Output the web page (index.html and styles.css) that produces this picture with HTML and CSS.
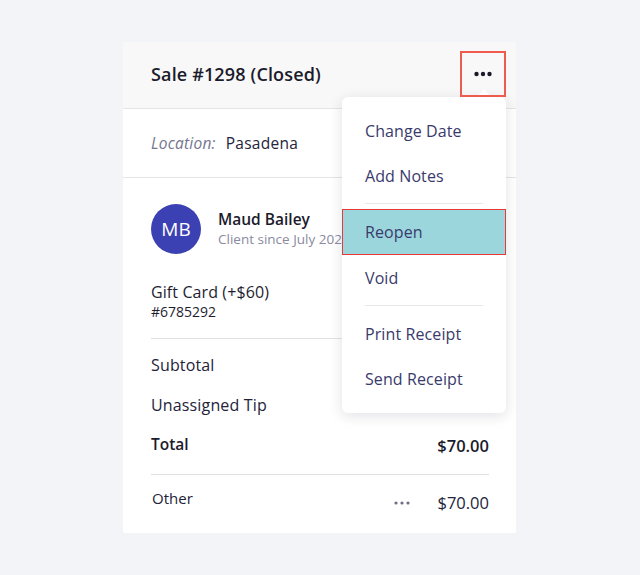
FILE: index.html
```html
<!DOCTYPE html>
<html>
<head>
<meta charset="utf-8">
<link rel="stylesheet" href="styles.css">
</head>
<body>
<div class="card">
  <div class="header">
    <div class="title">Sale #1298 (Closed)</div>
    <div class="more-btn">
      <svg width="18" height="6" viewBox="0 0 18 6"><circle cx="2.5" cy="3" r="2.2" fill="#1a1a2a"/><circle cx="9" cy="3" r="2.2" fill="#1a1a2a"/><circle cx="15.5" cy="3" r="2.2" fill="#1a1a2a"/></svg>
    </div>
  </div>
  <div class="location">
    <span class="loc-label">Location:</span>
    <span class="loc-value">Pasadena</span>
  </div>
  <div class="content">
    <div class="client">
      <div class="avatar">MB</div>
      <div class="client-info">
        <div class="client-name">Maud Bailey</div>
        <div class="client-sub">Client since July 2020</div>
      </div>
    </div>
    <div class="item">
      <div class="item-name">Gift Card (+$60)</div>
      <div class="item-sub">#6785292</div>
    </div>
    <div class="divider"></div>
    <div class="row first"><span>Subtotal</span></div>
    <div class="row"><span>Unassigned Tip</span></div>
    <div class="row total"><span>Total</span><span class="total-val">$70.00</span></div>
    <div class="divider second"></div>
    <div class="row other">
      <span class="other-label">Other</span>
      <span class="other-right">
        <svg width="16" height="4" viewBox="0 0 16 4"><circle cx="2" cy="2" r="1.6" fill="#6e6e86"/><circle cx="8" cy="2" r="1.6" fill="#6e6e86"/><circle cx="14" cy="2" r="1.6" fill="#6e6e86"/></svg>
        <span class="other-val">$70.00</span>
      </span>
    </div>
  </div>
  <div class="menu">
    <div class="menu-item">Change Date</div>
    <div class="menu-item">Add Notes</div>
    <div class="menu-sep"></div>
    <div class="menu-item active">Reopen</div>
    <div class="menu-item">Void</div>
    <div class="menu-sep"></div>
    <div class="menu-item">Print Receipt</div>
    <div class="menu-item">Send Receipt</div>
  </div>
</div>
</body>
</html>
```
FILE: styles.css
```css
html, body {
  margin: 0;
  padding: 0;
}
body {
  background: #f3f4f7;
  width: 640px;
  height: 575px;
  overflow: hidden;
  font-family: "Open Sans", "Lato", sans-serif;
  color: #1e1e30;
}
.card {
  position: relative;
  width: 393px;
  margin: 42px 0 0 123px;
  background: #ffffff;
}
.header {
  box-sizing: border-box;
  height: 67px;
  background: #f8f8f8;
  border-bottom: 1px solid #e5e5e8;
  display: flex;
  align-items: center;
  justify-content: space-between;
  padding: 0 10px 0 28px;
}
.title {
  font-size: 18px;
  font-weight: 600;
  letter-spacing: 0.15px;
  color: #1b1b2c;
  margin-bottom: 3px;
}
.more-btn {
  position: relative;
  z-index: 3;
  box-sizing: border-box;
  width: 46px;
  height: 46px;
  margin-bottom: 2px;
  border: 2px solid #ee5b4f;
  display: flex;
  align-items: center;
  justify-content: center;
}
.location {
  box-sizing: border-box;
  height: 69px;
  border-bottom: 1px solid #e5e5e8;
  display: flex;
  align-items: center;
  gap: 10px;
  padding-left: 28px;
  font-size: 15.5px;
  letter-spacing: 0.25px;
}
.loc-label {
  font-style: italic;
  color: #75758f;
}
.loc-value {
  color: #24243a;
}
.content {
  padding: 26px 27px 20px 28px;
}
.client {
  display: flex;
  align-items: center;
  gap: 17px;
}
.avatar {
  width: 50px;
  height: 50px;
  border-radius: 50%;
  background: #3b40b2;
  color: #ffffff;
  font-size: 19px;
  display: flex;
  align-items: center;
  justify-content: center;
  flex-shrink: 0;
}
.client-info {
  white-space: nowrap;
}
.client-name {
  font-size: 15.5px;
  font-weight: 600;
  line-height: 20px;
  color: #1b1b2c;
}
.client-sub {
  font-size: 13.5px;
  line-height: 20px;
  color: #8a8aa0;
}
.item {
  margin-top: 28px;
}
.item-name {
  font-size: 16px;
  line-height: 20px;
  letter-spacing: 0.1px;
}
.item-sub {
  font-size: 14px;
  line-height: 20px;
}
.divider {
  height: 1px;
  background: #e2e2e6;
  margin-top: 16px;
}
.divider.second {
  margin-top: 20px;
}
.row {
  display: flex;
  justify-content: space-between;
  align-items: baseline;
  font-size: 16px;
  line-height: 20px;
  margin-top: 20px;
  letter-spacing: 0.15px;
  color: #23233a;
}
.row.first {
  margin-top: 16px;
}
.row.total {
  margin-top: 19px;
  font-weight: 600;
  font-size: 15.5px;
  letter-spacing: 0;
  color: #1b1b2c;
}
.total-val {
  font-size: 16.5px;
  position: relative;
  top: 2px;
}
.row.other {
  margin-top: 13px;
  align-items: flex-start;
  letter-spacing: 0;
}
.other-label {
  padding-left: 1px;
  font-size: 15px;
}
.other-right {
  display: flex;
  align-items: center;
  gap: 27px;
  margin-top: 5px;
}
.other-val {
  font-size: 16.5px;
}
.menu {
  position: absolute;
  z-index: 2;
  left: 219px;
  top: 55px;
  width: 164px;
  box-sizing: border-box;
  padding: 11px 0 12px;
  background: #ffffff;
  border-radius: 6px;
  box-shadow: 0 3px 14px rgba(30, 30, 60, 0.13);
}
.menu::before {
  content: "";
  position: absolute;
  top: -8px;
  left: 135px;
  border-left: 7px solid transparent;
  border-right: 7px solid transparent;
  border-bottom: 8px solid #ffffff;
}
.menu-item {
  box-sizing: border-box;
  height: 45px;
  display: flex;
  align-items: center;
  padding-left: 23px;
  font-size: 16px;
  letter-spacing: 0.1px;
  color: #3a3a6c;
}
.menu-item.active {
  height: 46px;
  background: #9bd6dd;
  border: 1px solid #e5393b;
  padding-left: 22px;
}
.menu-sep {
  height: 1px;
  background: #e8e8ec;
  margin: 5px 23px;
}
```
